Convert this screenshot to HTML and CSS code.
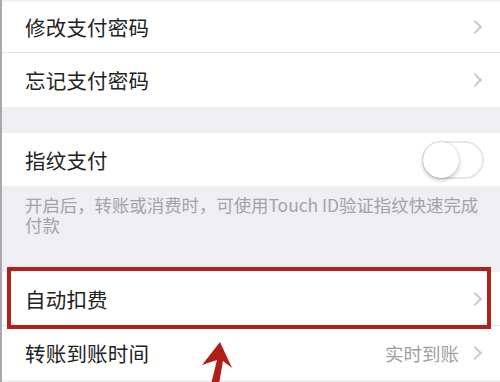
FILE: index.html
```html
<!DOCTYPE html>
<html lang="zh-CN">
<head>
<meta charset="utf-8">
<link rel="stylesheet" href="styles.css">
</head>
<body>
<div class="page">
  <div class="top-strip"></div>
  <div class="group">
    <div class="row row-first"><span class="label">修改支付密码</span><span class="chev"></span></div>
    <div class="row row-second"><span class="label">忘记支付密码</span><span class="chev"></span></div>
  </div>
  <div class="gap"></div>
  <div class="group">
    <div class="row row-toggle"><span class="label">指纹支付</span><span class="toggle"><span class="knob"></span></span></div>
  </div>
  <div class="footnote">开启后，转账或消费时，可使用Touch ID验证指纹快速完成付款</div>
  <div class="group">
    <div class="row row-auto"><span class="label">自动扣费</span><span class="chev"></span></div>
    <div class="row row-last"><span class="label">转账到账时间</span><span class="value">实时到账</span><span class="chev"></span></div>
  </div>
  <div class="highlight"></div>
  <svg class="arrow" width="50" height="46" viewBox="0 0 50 46">
    <polygon points="25,4 7,27 22,22 16,46 24,46 28,23 37,30" fill="#b01e18"/>
  </svg>
</div>
</body>
</html>
```

FILE: styles.css
```css
html, body {
  margin: 0;
  padding: 0;
}
body {
  width: 500px;
  height: 382px;
  overflow: hidden;
  background: #efeef3;
  font-family: "Noto Sans CJK SC", "Noto Sans", sans-serif;
}
.page {
  position: relative;
  display: flex;
  flex-direction: column;
  height: 382px;
  border-left: 2px solid #a9a9ab;
  box-sizing: border-box;
}
.top-strip {
  height: 2px;
  background: #f3f3f5;
}
.group {
  background: #fff;
  display: flex;
  flex-direction: column;
}
.row {
  display: flex;
  align-items: center;
  padding: 0 17px 0 23px;
  box-sizing: border-box;
}
.label {
  flex: 1;
  font-size: 20.5px;
  color: #222;
  letter-spacing: 0.2px;
}
.row-first {
  height: 51px;
  border-bottom: 1px solid #e6e6ea;
}
.row-second {
  height: 54px;
}
.gap {
  height: 26px;
}
.row-toggle {
  height: 53px;
}
.chev {
  width: 8px;
  height: 8px;
  border-top: 2px solid #c9c9ce;
  border-right: 2px solid #c9c9ce;
  transform: rotate(45deg);
  margin-right: 3px;
}
.toggle {
  position: relative;
  width: 58px;
  height: 34px;
  border: 2px solid #e6e6e9;
  border-radius: 20px;
  background: #fff;
  margin-right: -1px;
}
.knob {
  position: absolute;
  left: -1px;
  top: -1px;
  width: 36px;
  height: 36px;
  border-radius: 50%;
  background: #fff;
  box-shadow: 0 2px 4px rgba(0,0,0,0.25), 0 0 1px rgba(0,0,0,0.2);
}
.footnote {
  height: 86px;
  box-sizing: border-box;
  padding: 9px 18px 0 23px;
  font-size: 17.4px;
  line-height: 20px;
  color: #a3a3a6;
}
.row-auto {
  height: 54px;
  border-bottom: 1px solid #e6e6ea;
}
.row-last {
  height: 54px;
}
.value {
  font-size: 18.5px;
  color: #a0a0a3;
  margin-right: 11px;
}
.highlight {
  position: absolute;
  left: 5px;
  top: 267px;
  width: 484px;
  height: 62px;
  box-sizing: border-box;
  border: 4px solid #b3201c;
}
.arrow {
  position: absolute;
  left: 193px;
  top: 338px;
}
```
